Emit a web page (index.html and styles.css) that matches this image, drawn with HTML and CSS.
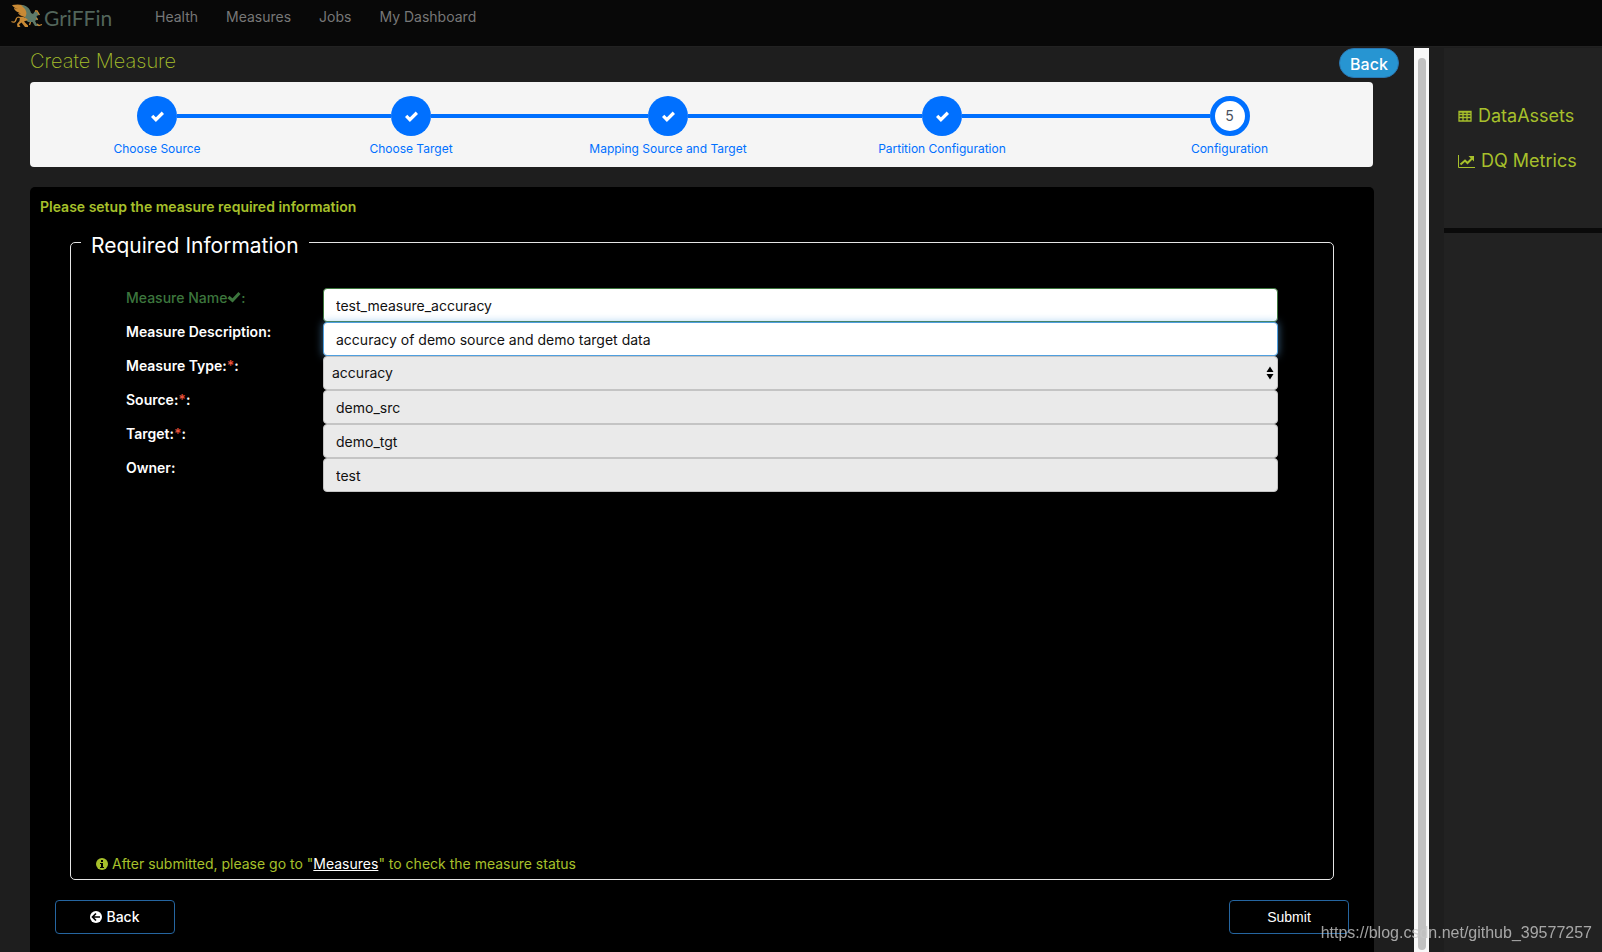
FILE: index.html
```html
<!DOCTYPE html>
<html lang="en">
<head>
<meta charset="utf-8">
<title>Griffin - Create Measure</title>
<link rel="stylesheet" href="styles.css">
</head>
<body>
<header class="topbar">
  <a class="brand" href="#">
    <svg class="brand-mark" viewBox="0 0 32 24" aria-hidden="true">
      <path fill="#c98a35" d="M1 1C6 0 12 0 15 3L17 8L15 13C12 13 8 11 7 9L10 9.500C6 8 3 6 3 4L7 5C4 4 2 3 1 1Z"/>
      <path fill="#5e7a69" d="M10 1C15 1 19 4 20 9L22 10L24 7L27 8.500L28 11L25.500 12L26.500 15L24 17L26 20.500L29 22H24L21.500 18L17 18L13 14C16 12 16 8 14 5Z"/>
      <path fill="#c98a35" d="M9 13C12 12 15 14 17 16L13 17.500L17 21.500V23H14L10.500 18.500L8 20.500L9.500 23H6.500L6 20L8.500 17Z"/>
      <path fill="none" stroke="#c98a35" stroke-width="1.300" d="M0.500 17.500C3 19 4.500 18 5 15.500S7.500 12.500 10 14M24 7L26 7L28.500 11M25.500 14L26.500 16M26 20L28 21.500L31 20.500M19.500 18L18.500 21"/>
    </svg>
    <span class="brand-name">GriFFin</span>
  </a>
  <nav class="menu">
    <a href="#">Health</a>
    <a href="#">Measures</a>
    <a href="#">Jobs</a>
    <a href="#">My Dashboard</a>
  </nav>
</header>

<div class="layout">
  <main class="content">
    <div class="title-row">
      <h1>Create Measure</h1>
      <button class="pill" type="button">Back</button>
    </div>

    <ol class="steps">
      <li class="step"><span class="track"><span class="dot"><svg viewBox="0 0 14 12" aria-hidden="true"><path d="M2 5.500L5.500 9L12 2.500"/></svg></span></span><span class="step-name">Choose Source</span></li>
      <li class="step"><span class="track"><span class="dot"><svg viewBox="0 0 14 12" aria-hidden="true"><path d="M2 5.500L5.500 9L12 2.500"/></svg></span></span><span class="step-name">Choose Target</span></li>
      <li class="step"><span class="track"><span class="dot"><svg viewBox="0 0 14 12" aria-hidden="true"><path d="M2 5.500L5.500 9L12 2.500"/></svg></span></span><span class="step-name">Mapping Source and Target</span></li>
      <li class="step"><span class="track"><span class="dot"><svg viewBox="0 0 14 12" aria-hidden="true"><path d="M2 5.500L5.500 9L12 2.500"/></svg></span></span><span class="step-name">Partition Configuration</span></li>
      <li class="step"><span class="track"><span class="dot current">5</span></span><span class="step-name">Configuration</span></li>
    </ol>

    <form class="panel">
      <p class="hint">Please setup the measure required information</p>
      <fieldset class="box">
        <legend>Required Information</legend>
        <div class="fields">
          <div class="field valid">
            <label for="name">Measure Name<svg class="tick" viewBox="0 0 14 12" aria-hidden="true"><path d="M1.500 6L5.500 9.500L12.500 2"/></svg>:</label>
            <input id="name" type="text" value="test_measure_accuracy">
          </div>
          <div class="field active">
            <label for="desc">Measure Description:</label>
            <input id="desc" type="text" value="accuracy of demo source and demo target data">
          </div>
          <div class="field">
            <label for="type">Measure Type:<span class="req">*</span>:</label>
            <div class="select-wrap">
              <select id="type" disabled><option>accuracy</option></select>
              <svg class="arrows" viewBox="0 0 8 14" aria-hidden="true"><path d="M4 0.500L7.500 6H0.500ZM4 13.500L7.500 8H0.500Z"/></svg>
            </div>
          </div>
          <div class="field">
            <label for="source">Source:<span class="req">*</span>:</label>
            <input id="source" type="text" value="demo_src" readonly>
          </div>
          <div class="field">
            <label for="target">Target:<span class="req">*</span>:</label>
            <input id="target" type="text" value="demo_tgt" readonly>
          </div>
          <div class="field">
            <label for="owner">Owner:</label>
            <input id="owner" type="text" value="test" readonly>
          </div>
        </div>
        <p class="note">
          <svg class="note-icon" viewBox="0 0 12 12" aria-hidden="true"><circle cx="6" cy="6" r="6" fill="#a7c02b"/><path fill="#000" d="M5 2H7V4H5ZM4 5H7V9H8V10H4V9H5V6H4Z"/></svg>
          <span>After submitted, please go to "<a href="#">Measures</a>" to check the measure status</span>
        </p>
      </fieldset>
      <div class="actions">
        <button class="btn" type="button"><svg viewBox="0 0 12 12" aria-hidden="true"><circle cx="6" cy="6" r="6" fill="#fff"/><path fill="none" stroke="#000" stroke-width="1.700" d="M10 6H3M6 2.500L2.500 6L6 9.500"/></svg>Back</button>
        <button class="btn submit" type="button">Submit</button>
      </div>
    </form>
  </main>

  <div class="scroll"><div class="thumb"></div></div>

  <aside class="side">
    <nav class="side-nav">
      <a href="#"><svg width="14" height="12" viewBox="0 0 14 12" aria-hidden="true"><path fill="none" stroke="#a7c02b" stroke-width="1.300" d="M1 1.500H13V11H1ZM1 4.500H13M1 7.500H13M5 2V11M9 2V11M1 2H13"/></svg>DataAssets</a>
      <a href="#"><svg width="17" height="13" viewBox="0 0 17 13" aria-hidden="true"><path fill="none" stroke="#a7c02b" d="M0.500 0V12.500H17"/><path fill="none" stroke="#a7c02b" stroke-width="2" d="M2.500 9.500L7 5.500L9.500 8L14 3.500"/><path fill="#a7c02b" d="M10.500 1H16V6.500Z"/></svg>DQ Metrics</a>
    </nav>
  </aside>
</div>
<div class="watermark">https://blog.csdn.net/github_39577257</div>
</body>
</html>
```
FILE: styles.css
```css
* { box-sizing: border-box; }

body {
  margin: 0;
  height: 100vh;
  display: flex;
  flex-direction: column;
  overflow: hidden;
  background: #1e1e1e;
  color: #fff;
  font: 14px/20px Inter, "Liberation Sans", sans-serif;
}

a { color: inherit; text-decoration: none; }

/* Top bar */
.topbar {
  display: flex;
  align-items: flex-start;
  flex: none;
  height: 47px;
  padding-left: 11px;
  background: #080808;
  border-bottom: 1px solid #222;
}
.brand { display: flex; width: 130px; padding-top: 4px; }
.brand-mark { width: 32px; height: 24px; margin-right: 1px; }
.brand-name {
  padding-top: 4px;
  color: #52655b;
  font: 400 21px/20px Lato, sans-serif;
}
.menu { display: flex; color: #777; padding-top: 7px; }
.menu a { padding: 0 14px; }

/* Page columns */
.layout { display: flex; flex: 1; min-height: 0; padding-top: 1px; }
.content {
  flex: 1;
  display: flex;
  flex-direction: column;
  min-width: 0;
  padding: 0 40px 0 30px;
}
.scroll {
  flex: none;
  width: 15px;
  padding: 10px 3px 2px 4px;
  background: #f8f8f8;
}
.thumb { height: 100%; border-radius: 4px; background: #c1c1c1; }
.side { flex: none; width: 158px; margin-left: 15px; background: #222; }
.side-nav {
  display: flex;
  flex-direction: column;
  gap: 21px;
  height: 185px;
  padding: 56px 0 0 14px;
  border-bottom: 5px solid #0a0a0a;
  color: #a7c02b;
  font-size: 18px;
  line-height: 24px;
}
.side-nav a { display: flex; align-items: center; gap: 6px; }

/* Title */
.title-row {
  display: flex;
  justify-content: space-between;
  align-items: flex-start;
  height: 34px;
  margin-right: -25px;
}
h1 {
  margin: 0;
  color: #a7c02b;
  font-size: 20px;
  font-weight: 200;
  line-height: 26px;
}
.pill {
  width: 60px;
  height: 30px;
  padding: 2px 0 0;
  border: 1px solid #2a76b0;
  border-radius: 15px;
  background: #2795d2;
  color: #fff;
  font: 500 16px/26px Inter, sans-serif;
}

/* Progress steps */
.steps {
  display: grid;
  grid-template-columns: 254fr 254fr 260fr 288fr 287fr;
  flex: none;
  margin: 0 1px 0 0;
  padding: 14px 0 8px;
  list-style: none;
  border-radius: 4px;
  background: #f5f5f5;
  color: #0070ff;
  font-size: 12px;
  line-height: 16px;
}
.step { display: flex; flex-direction: column; gap: 5px; align-items: center; padding-bottom: 2px; }
.track { display: flex; align-items: center; width: 100%; }
.track::before, .track::after { content: ""; flex: 1; height: 4px; background: #0070ff; }
.step:first-child .track::before, .step:last-child .track::after { background: none; }
.dot {
  display: flex;
  align-items: center;
  justify-content: center;
  width: 40px;
  height: 40px;
  border-radius: 50%;
  background: #0070ff;
}
.dot svg { width: 15px; height: 13px; fill: none; stroke: #fff; stroke-width: 3; }
.dot.current { border: 5px solid #0070ff; background: #fff; color: #4a5060; font-size: 14px; }

/* Form panel */
.panel {
  display: flex;
  flex: 1;
  flex-direction: column;
  margin-top: 20px;
  padding: 10px 40px 18px;
  border-radius: 5px 5px 0 0;
  background: #000;
}
.hint { margin: 0 0 8px -30px; color: #a7c02b; font-weight: 600; }
.box {
  display: flex;
  flex: 1;
  flex-direction: column;
  margin: 0;
  padding: 29px 55px 5px;
  border: 1px solid #e5e5e5;
  border-radius: 5px;
}
legend { margin-left: -45px; padding: 8px 10px 0; font-size: 21px; line-height: 26px; }
.field { display: grid; grid-template-columns: 197px 1fr; height: 34px; }
.field label { font-weight: 600; line-height: 20px; }
.field input, .field select {
  width: 100%;
  height: 34px;
  padding: 6px 12px;
  border: 1px solid #c4c4c4;
  border-radius: 4px;
  outline: none;
  background: #eaeaea;
  color: #111;
  font: inherit;
  opacity: 1;
}
.field select { padding: 6px 8px; appearance: none; }
.select-wrap { position: relative; }
.arrows { position: absolute; top: 10px; right: 4px; width: 8px; height: 14px; }
.valid label { color: #3c763d; font-weight: 500; }
.valid input { border-color: #3c763d; background: #fff; }
.tick { width: 14px; height: 12px; fill: none; stroke: #3c763d; stroke-width: 3; }
.active input {
  border-color: #4f9fdf;
  background: #fff;
  box-shadow: 0 0 8px rgba(102, 175, 233, .6);
}
.req { color: #e8513a; }
.note {
  display: flex;
  align-items: center;
  gap: 4px;
  margin: auto 0 0 -30px;
  color: #a7c02b;
}
.note-icon { width: 12px; height: 12px; }
.note a { color: #fff; text-decoration: underline; }

/* Form buttons */
.actions { display: flex; justify-content: space-between; margin: 20px -15px 0; }
.btn {
  display: flex;
  align-items: center;
  justify-content: center;
  gap: 4px;
  width: 120px;
  height: 34px;
  padding: 0;
  border: 1px solid #2565a0;
  border-radius: 4px;
  background: #000;
  color: #fff;
  font: 500 14px/20px Inter, sans-serif;
}
.btn svg { width: 12px; height: 12px; }
.submit { font-family: "Liberation Sans", sans-serif; }

.watermark {
  position: fixed;
  right: 10px;
  bottom: 8px;
  color: rgba(200, 200, 200, .8);
  font: 16px/22px "Liberation Sans", sans-serif;
}
```
